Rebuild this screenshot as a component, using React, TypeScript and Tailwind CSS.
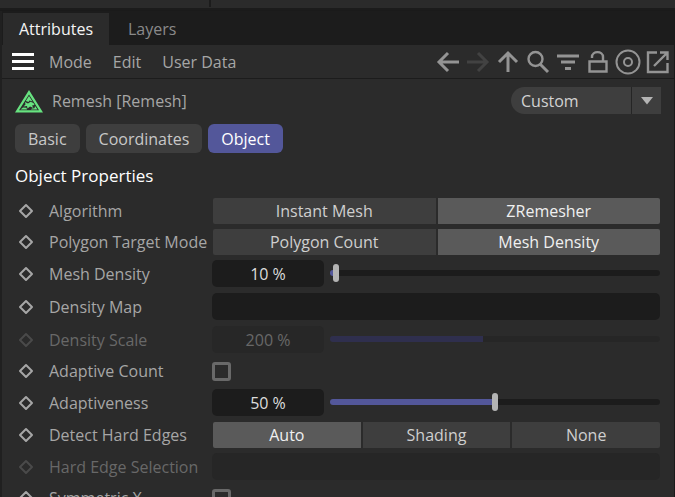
import { useState } from "react";
import type { ReactNode } from "react";

function Diamond({ dim }: { dim?: boolean }) {
  return (
    <span className="flex w-[22px] shrink-0 justify-center">
      <svg viewBox="0 0 16 16" className={dim ? "h-4 w-4 text-[#4a4a4a]" : "h-4 w-4 text-[#a6a6a6]"} fill="none" stroke="currentColor" strokeWidth="2" strokeLinejoin="round">
        <path d="M8 2 L14 8 L8 14 L2 8 Z" />
      </svg>
    </span>
  );
}

const rowSizes = {
  segment: "h-[31px]",
  field: "h-[33px]",
  check: "h-[30px]",
};

function Row({ label, htmlFor, size, dim, children }: { label: string; htmlFor?: string; size: keyof typeof rowSizes; dim?: boolean; children: ReactNode }) {
  return (
    <div className={`flex shrink-0 items-center ${rowSizes[size]}`}>
      <Diamond dim={dim} />
      <label htmlFor={htmlFor} className={`ml-3 w-[163px] shrink-0 whitespace-nowrap ${dim ? "text-[#686868]" : "text-[#a6a6a6]"}`}>
        {label}
      </label>
      <div className="flex min-w-0 flex-1 items-center">{children}</div>
    </div>
  );
}

function Segments({ label, options, initial }: { label: string; options: string[]; initial: string }) {
  const [active, setActive] = useState(initial);
  return (
    <div role="group" aria-label={label} className="ml-px flex flex-1 gap-0.5 overflow-hidden rounded-xs">
      {options.map((o) => (
        <button
          key={o}
          type="button"
          aria-pressed={o === active}
          onClick={() => setActive(o)}
          className={`h-[26px] flex-1 basis-0 ${o === active ? "bg-[#5a5a5a] text-[#f0f0f0]" : "bg-[#3e3e3e] text-[#cfcfcf]"}`}
        >
          {o}
        </button>
      ))}
    </div>
  );
}

function Amount({ id, label, value, min, max, disabled }: { id: string; label: string; value: number; min: number; max: number; disabled?: boolean }) {
  const [v, setV] = useState(value);
  const part = ((v - min) / (max - min)) * 100;
  const fill = disabled ? "#2f2f4e" : "#53579a";
  const rest = disabled ? "#262626" : "#1c1c1c";
  return (
    <>
      <input
        id={id}
        type="text"
        readOnly
        disabled={disabled}
        value={`${v} %`}
        className="h-[27px] w-28 shrink-0 rounded-[5px] bg-[#1c1c1c] text-center text-[#dcdcdc] disabled:bg-[#272727] disabled:text-[#686868]"
      />
      <input
        type="range"
        aria-label={`${label} slider`}
        min={min}
        max={max}
        value={v}
        disabled={disabled}
        onChange={(e) => setV(Number(e.target.value))}
        style={{ backgroundImage: `linear-gradient(to right, ${fill} ${part}%, ${rest} ${part}%)` }}
        className="mb-0.5 ml-1.5 h-1.5 min-w-0 flex-1 appearance-none rounded-full [&::-webkit-slider-thumb]:h-[18px] [&::-webkit-slider-thumb]:w-1.5 [&::-webkit-slider-thumb]:appearance-none [&::-webkit-slider-thumb]:rounded-full [&::-webkit-slider-thumb]:bg-[#b4b4b4] disabled:[&::-webkit-slider-thumb]:opacity-0"
      />
    </>
  );
}

function LinkField({ id, disabled }: { id: string; disabled?: boolean }) {
  return <input id={id} type="text" disabled={disabled} className="h-[27px] min-w-0 flex-1 rounded-[5px] bg-[#1c1c1c] px-2 text-[#dcdcdc] disabled:bg-[#262626]" />;
}

function Check({ id }: { id: string }) {
  return <input id={id} type="checkbox" className="h-[19px] w-[19px] appearance-none rounded-[3px] border-3 border-[#696969] checked:bg-[#53579a]" />;
}

function ToolButton({ label, dim, children }: { label: string; dim?: boolean; children: ReactNode }) {
  return (
    <button type="button" aria-label={label} disabled={dim} className={dim ? "w-[30px] text-[#424242]" : "w-[30px] text-[#949494]"}>
      <svg viewBox="0 0 30 30" className="h-[30px] w-[30px]" fill="none" stroke="currentColor" strokeWidth="2.4">
        {children}
      </svg>
    </button>
  );
}

const pages = ["Basic", "Coordinates", "Object"];

export default function App() {
  const [page, setPage] = useState("Object");
  return (
    <div className="flex h-screen flex-col overflow-hidden bg-[#2b2b2b] font-['Open_Sans','Noto_Sans',sans-serif] text-base leading-6 text-[#a6a6a6]">
      <div className="h-2 shrink-0">
        <div className="ml-[209px] h-[7px] w-0.5 bg-[#1c1c1c]" />
      </div>
      <div className="h-0.5 shrink-0 bg-[#1c1c1c]" />
      <main className="mt-px mr-px flex min-h-0 flex-1 flex-col border-l-2 border-[#202020] ring-1 ring-[#1a1a1a]">
        <nav className="flex h-[34px] shrink-0 bg-[#1c1c1c] pt-0.5">
          <button type="button" className="ml-px bg-[#2b2b2b] px-4 text-[#f4f4f4]">Attributes</button>
          <button type="button" className="px-[19px] text-[#8a8a8a]">Layers</button>
        </nav>
        <div className="flex h-[34px] shrink-0 items-center border-b border-[#1c1c1c] pl-2.5">
          <button type="button" aria-label="Menu" className="flex w-[22px] flex-col gap-1">
            <span className="h-[3px] bg-white" />
            <span className="h-[3px] bg-white" />
            <span className="h-[3px] bg-white" />
          </button>
          <div className="ml-[15px] flex gap-[21px] whitespace-nowrap">
            <button type="button">Mode</button>
            <button type="button">Edit</button>
            <button type="button">User Data</button>
          </div>
          <div className="ml-auto flex pr-px">
            <ToolButton label="Back">
              <path d="M26 15H6M15 6L6 15L15 24" strokeWidth="3" />
            </ToolButton>
            <ToolButton label="Forward" dim>
              <path d="M4 15H24M15 6L24 15L15 24" strokeWidth="3" />
            </ToolButton>
            <ToolButton label="Up">
              <path d="M15 25V6M6 15L15 6L24 15" strokeWidth="3" />
            </ToolButton>
            <ToolButton label="Search">
              <circle cx="12.5" cy="12" r="7" />
              <path d="M17 17L25 25" strokeWidth="3" />
            </ToolButton>
            <ToolButton label="Filter">
              <path d="M4 9H26M8 15H22M12 21.5H18" strokeWidth="3" />
            </ToolButton>
            <ToolButton label="Lock">
              <path d="M6.5 14.5H23.5V24.5H6.5ZM9 11V10C9 3.5 20 3.5 20 10V14.5" />
            </ToolButton>
            <ToolButton label="Focus">
              <circle cx="15" cy="15" r="11.5" strokeWidth="2" />
              <circle cx="15" cy="15" r="4" strokeWidth="2" />
            </ToolButton>
            <ToolButton label="New window">
              <path d="M14 5.500H5V25H24.500V16M17 5.500H24.500V13M24 6L11 19" />
            </ToolButton>
          </div>
        </div>
        <div className="flex h-[43px] shrink-0 items-center px-[13px]">
          <svg viewBox="0 0 28 24" className="h-6 w-7" fill="#67e380">
            <path fillRule="evenodd" d="M14 1L28 23.500H0ZM14 5.500L4 21.200H24Z" />
            <path d="M14 7L17.500 12.500L14.500 11.500L13.500 13L10.800 12ZM10 13L13 14.500L15.500 12.800L18.500 14L19.500 16L17 16.500L18.500 19L15 17.500L12.500 19.500L12 17L8.500 17.500L10.500 15.500ZM5.500 20.500L8 18.500L11.500 18.800L12 20.500ZM16 20.500L17 19.500L19.500 19.200L20 17L22.500 20.500Z" />
          </svg>
          <h1 className="ml-[9px]">Remesh [Remesh]</h1>
          <div className="relative ml-auto h-[27px] w-[150px]">
            <select aria-label="Layout" className="h-full w-full appearance-none rounded-l-full rounded-r-[7px] bg-[#3e3e3e] pl-2.5 text-[#d2d2d2]">
              <option>Custom</option>
            </select>
            <span className="pointer-events-none absolute inset-y-0 right-0 flex w-[30px] items-center justify-center border-l border-[#252525]">
              <svg viewBox="0 0 12 8" className="h-2 w-3" fill="#b4b4b4">
                <path d="M0 0H12L6 7.500Z" />
              </svg>
            </span>
          </div>
        </div>
        <div className="flex shrink-0 gap-1.5 pt-0.5 pl-[13px]">
          {pages.map((p) => (
            <button
              key={p}
              type="button"
              aria-pressed={p === page}
              onClick={() => setPage(p)}
              className={`h-[29px] rounded-[6px] px-[13px] ${p === page ? "bg-[#53579a] text-white" : "bg-[#3e3e3e] text-[#c8c8c8]"}`}
            >
              {p}
            </button>
          ))}
        </div>
        <h2 className="mt-[11px] mb-[7px] shrink-0 pl-[13px] text-[17px] leading-6 text-white">Object Properties</h2>
        <form className="flex flex-col pr-3.5 pl-[13px]">
          <Row label="Algorithm" size="segment">
            <Segments label="Algorithm" options={["Instant Mesh", "ZRemesher"]} initial="ZRemesher" />
          </Row>
          <Row label="Polygon Target Mode" size="segment">
            <Segments label="Polygon Target Mode" options={["Polygon Count", "Mesh Density"]} initial="Mesh Density" />
          </Row>
          <Row label="Mesh Density" htmlFor="density" size="field">
            <Amount id="density" label="Mesh Density" value={10} min={7} max={330} />
          </Row>
          <Row label="Density Map" htmlFor="map" size="field">
            <LinkField id="map" />
          </Row>
          <Row label="Density Scale" htmlFor="scale" size="field" dim>
            <Amount id="scale" label="Density Scale" value={200} min={0} max={430} disabled />
          </Row>
          <Row label="Adaptive Count" htmlFor="adaptive" size="check">
            <Check id="adaptive" />
          </Row>
          <Row label="Adaptiveness" htmlFor="adaptiveness" size="field">
            <Amount id="adaptiveness" label="Adaptiveness" value={50} min={0} max={100} />
          </Row>
          <Row label="Detect Hard Edges" size="segment">
            <Segments label="Detect Hard Edges" options={["Auto", "Shading", "None"]} initial="Auto" />
          </Row>
          <Row label="Hard Edge Selection" htmlFor="selection" size="field" dim>
            <LinkField id="selection" disabled />
          </Row>
          <Row label="Symmetric X" htmlFor="symmetric" size="check">
            <Check id="symmetric" />
          </Row>
        </form>
      </main>
    </div>
  );
}
